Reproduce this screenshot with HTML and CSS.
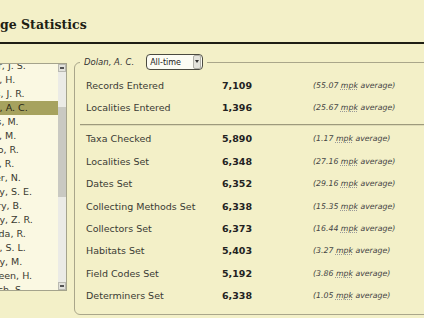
FILE: index.html
```html
<!DOCTYPE html>
<html>

<head>
	<title>Usage Statistics</title>

	<link rel="stylesheet" href="styles.css">

</head>

<body>

	<div class="page">
		<h1 class="title">Usage Statistics</h1>

		<div class="main">
			<div class="people">
				<ul class="people-list">
					<li>Carter, J. S.</li>
					<li>Baker, H.</li>
					<li>Evans, J. R.</li>
					<li class="selected">Dolan, A. C.</li>
					<li>Hayes, M.</li>
					<li>Kraus, M.</li>
					<li>Franco, R.</li>
					<li>Grant, R.</li>
					<li>Harper, N.</li>
					<li>Healey, S. E.</li>
					<li>Hendry, B.</li>
					<li>Quincy, Z. R.</li>
					<li>Miranda, R.</li>
					<li>Nolan, S. L.</li>
					<li>Quincy, M.</li>
					<li>Van Veen, H.</li>
					<li>Wallach, S.</li>
				</ul>
				<div class="scrollbar">
					<div class="sb-btn up"></div>
					<div class="sb-track">
						<div class="sb-thumb"></div>
					</div>
					<div class="sb-btn down"></div>
				</div>
			</div>

			<fieldset class="stats">
				<legend>
					<span class="who">Dolan, A. C.</span>
					<span class="period">All-time<span class="period-btn"></span></span>
				</legend>

				<div class="row">
					<span class="label">Records Entered</span>
					<span class="value">7,109</span>
					<span class="avg">(55.07 <abbr title="marks per keystroke">mpk</abbr> average)</span>
				</div>
				<div class="row">
					<span class="label">Localities Entered</span>
					<span class="value">1,396</span>
					<span class="avg">(25.67 <abbr>mpk</abbr> average)</span>
				</div>

				<div class="divider"></div>

				<div class="row">
					<span class="label">Taxa Checked</span>
					<span class="value">5,890</span>
					<span class="avg">(1.17 <abbr>mpk</abbr> average)</span>
				</div>
				<div class="row">
					<span class="label">Localities Set</span>
					<span class="value">6,348</span>
					<span class="avg">(27.16 <abbr>mpk</abbr> average)</span>
				</div>
				<div class="row">
					<span class="label">Dates Set</span>
					<span class="value">6,352</span>
					<span class="avg">(29.16 <abbr>mpk</abbr> average)</span>
				</div>
				<div class="row">
					<span class="label">Collecting Methods Set</span>
					<span class="value">6,338</span>
					<span class="avg">(15.35 <abbr>mpk</abbr> average)</span>
				</div>
				<div class="row">
					<span class="label">Collectors Set</span>
					<span class="value">6,373</span>
					<span class="avg">(16.44 <abbr>mpk</abbr> average)</span>
				</div>
				<div class="row">
					<span class="label">Habitats Set</span>
					<span class="value">5,403</span>
					<span class="avg">(3.27 <abbr>mpk</abbr> average)</span>
				</div>
				<div class="row">
					<span class="label">Field Codes Set</span>
					<span class="value">5,192</span>
					<span class="avg">(3.86 <abbr>mpk</abbr> average)</span>
				</div>
				<div class="row">
					<span class="label">Determiners Set</span>
					<span class="value">6,338</span>
					<span class="avg">(1.05 <abbr>mpk</abbr> average)</span>
				</div>
			</fieldset>
		</div>
	</div>

</body>

</html>
```

FILE: styles.css
```css
html,
body {
	margin: 0;
	background: #f3f0c8;
	overflow: hidden;
}

body {
	font-family: "DejaVu Sans", sans-serif;
	color: #333;
}

.page {
	margin-left: -32px;
	width: 560px;
}

.title {
	margin: 0;
	padding: 17px 0 9px 6px;
	font-family: "DejaVu Serif", serif;
	font-size: 12.5px;
	line-height: 16px;
	color: #1e1e14;
	border-bottom: 2px solid #1e1e14;
}

.main {
	display: flex;
	align-items: flex-start;
	margin-top: 10px;
}

/* person list */
.people {
	display: flex;
	flex-shrink: 0;
	width: 97px;
	height: 226px;
	margin-top: 9px;
	border: 1px solid #a4a38c;
	background: #faf8e2;
}

.people-list {
	flex: 1;
	margin: 0;
	padding: 0;
	list-style: none;
	overflow: hidden;
	font-size: 9.5px;
	color: #3a3a30;
}

.people-list li {
	height: 14px;
	line-height: 14px;
	padding-left: 3px;
	white-space: nowrap;
}

.people-list li:first-child {
	margin-top: -5px;
}

.people-list li.selected {
	background: #a6a25e;
	color: #262616;
}

.scrollbar {
	display: flex;
	flex-direction: column;
	width: 8px;
	background: #ebebe6;
}

.sb-btn {
	height: 8px;
	box-sizing: border-box;
	border: 1px solid #b9b9b2;
	background: #e2e2dc;
	position: relative;
}

.sb-btn::after {
	content: "";
	position: absolute;
	left: 1px;
	top: 2px;
	width: 4px;
	height: 2px;
	background: #555;
}

.sb-track {
	flex: 1;
	padding-top: 35px;
}

.sb-thumb {
	height: 90px;
	background: #c9c9c2;
}

/* stats box */
.stats {
	flex-shrink: 0;
	width: 420px;
	margin: 0 0 0 7px;
	padding: 4px 0 7px 5px;
	border: 1px solid #a9a68a;
	border-radius: 6px;
}

.stats legend {
	display: flex;
	align-items: center;
	height: 16px;
	padding: 0 4px;
}

.who {
	font-size: 8.5px;
	font-style: italic;
	color: #333;
}

.period {
	display: inline-flex;
	align-items: center;
	box-sizing: border-box;
	width: 57px;
	height: 16px;
	margin-left: 12px;
	padding-left: 3px;
	border: 1px solid #4a4a40;
	border-radius: 4px;
	background: #fcfcf4;
	font-size: 8px;
	color: #222;
}

.period-btn {
	margin-left: auto;
	margin-right: 1px;
	width: 6px;
	height: 12px;
	border-radius: 2px;
	background: #e3e3dc;
	border: 1px solid #b0b0a8;
	position: relative;
}

.period-btn::after {
	content: "";
	position: absolute;
	left: 1px;
	top: 4px;
	border: 2px solid transparent;
	border-top: 3px solid #333;
}

.row {
	display: grid;
	grid-template-columns: 136px 91px auto;
	align-items: center;
	height: 22.4px;
	padding-left: 6px;
	white-space: nowrap;
}

.label {
	font-size: 9.5px;
	color: #3a3a34;
}

.value {
	font-size: 9.5px;
	font-weight: bold;
	color: #222;
}

.avg {
	font-size: 7.8px;
	font-style: italic;
	color: #444;
}

.avg abbr {
	text-decoration: underline dotted #999;
}

.divider {
	margin: 5px 0 2px;
	border-top: 1px solid #9d9a7c;
	border-bottom: 1px solid #dedbb6;
}
```
